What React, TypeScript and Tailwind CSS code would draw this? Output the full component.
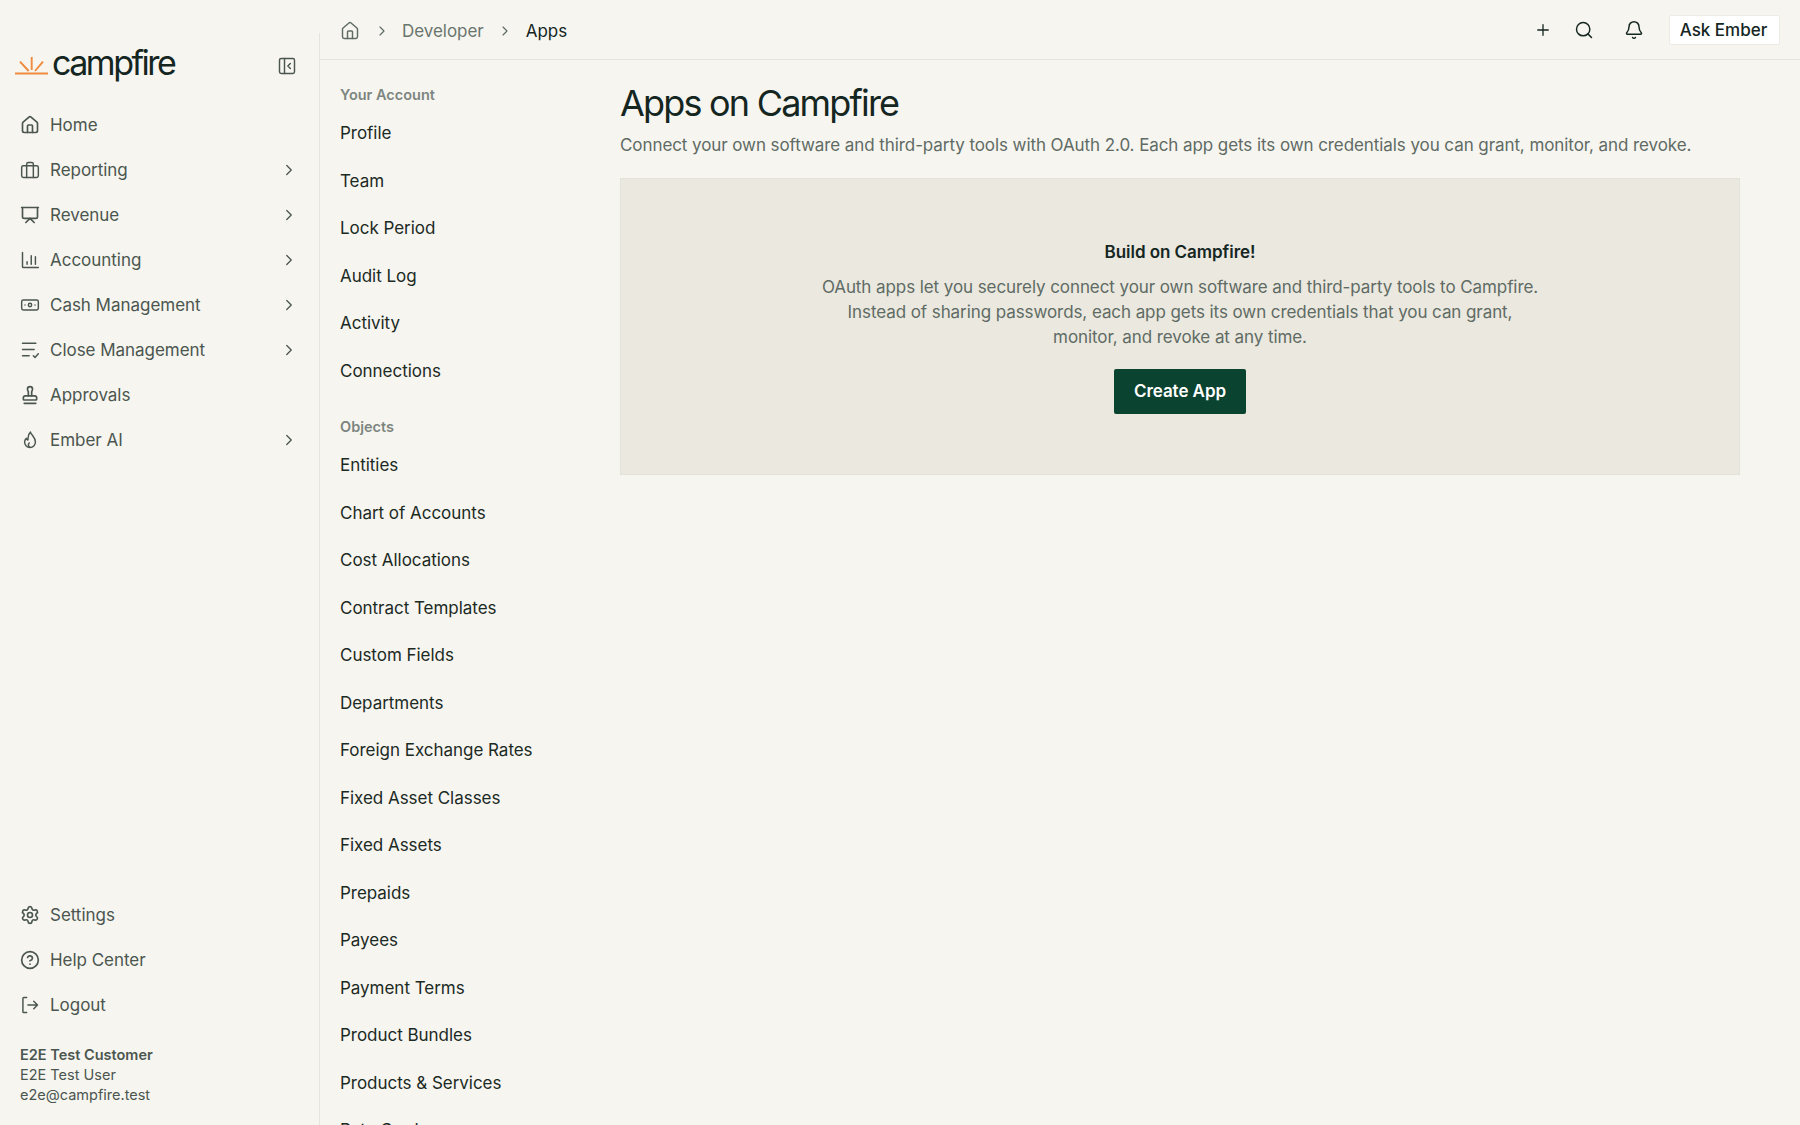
import React from "react";
import { House, Presentation, Stamp, Settings, CircleHelp, ChevronRight, PanelLeftClose, Plus, Search, Bell } from "lucide-react";

type IconProps = { className?: string };

const Svg = ({ className, children }: IconProps & { children: React.ReactNode }) => (
  <svg viewBox="0 0 24 24" fill="none" stroke="currentColor" strokeWidth={1.75} strokeLinecap="round" strokeLinejoin="round" className={className}>
    {children}
  </svg>
);

const Luggage = ({ className }: IconProps) => (
  <Svg className={className}>
    <rect x="2" y="7" width="20" height="14" rx="2" />
    <path d="M8 21V5a2 2 0 0 1 2-2h4a2 2 0 0 1 2 2v16" />
  </Svg>
);
const Chart = ({ className }: IconProps) => (
  <Svg className={className}>
    <path d="M3 3v17a1 1 0 0 0 1 1h18" />
    <path d="M8.500 17v-3M13.500 17V7M18.500 17V8" />
  </Svg>
);
const Cash = ({ className }: IconProps) => (
  <Svg className={className}>
    <rect x="2" y="6" width="20" height="12" rx="2" />
    <circle cx="12" cy="12" r="2" />
    <path d="M6 12h.01M18 12h.01" />
  </Svg>
);
const CloseList = ({ className }: IconProps) => (
  <Svg className={className}>
    <path d="M3 4h16M3 11.500h14M3 19h8" />
    <path d="M16 19l2 2 4-4.500" />
  </Svg>
);
const Flame = ({ className }: IconProps) => (
  <Svg className={className}>
    <path d="M12.500 2.500c1 3.500 6 6 6 12a6.500 6.500 0 0 1-13 0c0-2 .8-3.500 2-4.500.5 1 1.200 1.600 2 2 .5-3-.5-6.500 3-9.500z" />
    <path d="M11.500 20.500c-1.800-1.200-2-3.200-.5-5" />
  </Svg>
);
const LogoutIcon = ({ className }: IconProps) => (
  <Svg className={className}>
    <path d="M8 3H4.500a1 1 0 0 0-1 1v16a1 1 0 0 0 1 1H8" />
    <path d="M9.500 12H21M16.500 7.500 21 12l-4.500 4.500" />
  </Svg>
);

const SideRow = ({ icon: Icon, label, chevron }: { icon: React.ComponentType<IconProps>; label: string; chevron?: boolean }) => (
  <div className="flex h-[45px] items-center pl-[20px] pr-[21px] text-[#4b564f]">
    <Icon className="h-[20px] w-[20px] shrink-0 text-[#4b564f]" />
    <span className="ml-[10px] flex-1 text-[17px] leading-[24px] tracking-[-0.03px]">{label}</span>
    {chevron && <ChevronRight className="h-[18px] w-[18px] text-[#4b564f]" strokeWidth={1.75} />}
  </div>
);

const SubLink = ({ label }: { label: string }) => (
  <div className="flex h-[47.500px] items-center text-[17px] leading-[24px] tracking-[-0.03px] text-[#1c2a24]">{label}</div>
);

const SubHead = ({ label }: { label: string }) => (
  <div className="flex h-[24px] items-center text-[14.500px] font-semibold leading-[20px] text-[#7c857f]">{label}</div>
);

const account = ["Profile", "Team", "Lock Period", "Audit Log", "Activity", "Connections"];
const objects = [
  "Entities", "Chart of Accounts", "Cost Allocations", "Contract Templates", "Custom Fields", "Departments",
  "Foreign Exchange Rates", "Fixed Asset Classes", "Fixed Assets", "Prepaids", "Payees", "Payment Terms",
  "Product Bundles", "Products & Services", "Rate Cards",
];

export default function App() {
  return (
    <div className="flex h-[1125px] w-[1800px] overflow-hidden bg-[#f6f5f0] font-['Inter',sans-serif]">
      <aside className="mt-[33px] flex w-[320px] shrink-0 flex-col border-r border-[#e6e4dc] pb-[20px]">
        <div className="flex h-[64px] items-center pl-[14px] pr-[22px]">
          <svg viewBox="0 0 36 24" className="h-[24px] w-[36px] shrink-0 text-[#f08a3c]" fill="none" stroke="currentColor" strokeWidth={1.9} strokeLinecap="butt">
            <path d="M1 20.500h33" />
            <path d="M17.700 4v13M6 8.600l8.700 9.400M29 8.600 21 18" />
          </svg>
          <span className="ml-[2px] flex-1 pb-[4px] text-[34px] leading-[40px] tracking-[-2.500px] text-[#14261f]">campfire</span>
          <PanelLeftClose className="mt-[2px] h-[20px] w-[20px] text-[#4b564f]" strokeWidth={1.75} />
        </div>
        <nav className="mt-[5.500px] flex flex-col">
          <SideRow icon={House} label="Home" />
          <SideRow icon={Luggage} label="Reporting" chevron />
          <SideRow icon={Presentation} label="Revenue" chevron />
          <SideRow icon={Chart} label="Accounting" chevron />
          <SideRow icon={Cash} label="Cash Management" chevron />
          <SideRow icon={CloseList} label="Close Management" chevron />
          <SideRow icon={Stamp} label="Approvals" />
          <SideRow icon={Flame} label="Ember AI" chevron />
        </nav>
        <div className="mt-auto flex flex-col">
          <SideRow icon={Settings} label="Settings" />
          <SideRow icon={CircleHelp} label="Help Center" />
          <SideRow icon={LogoutIcon} label="Logout" />
          <div className="mt-[18px] pl-[20px] text-[14.500px] leading-[20px] text-[#4b564f]">
            <div className="font-semibold">E2E Test Customer</div>
            <div>E2E Test User</div>
            <div>e2e@campfire.test</div>
          </div>
        </div>
      </aside>

      <div className="flex min-w-0 flex-1 flex-col">
        <header className="flex h-[60px] shrink-0 items-center border-b border-[#e6e4dc] pl-[20px] pr-[20px]">
          <House className="mt-[2px] h-[20px] w-[20px] text-[#5f6b64]" strokeWidth={1.75} />
          <ChevronRight className="ml-[14px] mt-[2px] h-[16px] w-[16px] text-[#5f6b64]" strokeWidth={1.75} />
          <span className="ml-[12px] mt-[4px] text-[17px] tracking-[-0.03px] text-[#6a756e]">Developer</span>
          <ChevronRight className="ml-[13px] mt-[2px] h-[16px] w-[16px] text-[#5f6b64]" strokeWidth={1.75} />
          <span className="ml-[13px] mt-[4px] text-[17px] tracking-[-0.03px] text-[#14261f]">Apps</span>
          <div className="ml-auto mt-[1px] flex items-center">
            <Plus className="h-[18px] w-[18px] text-[#14261f]" strokeWidth={1.75} />
            <Search className="ml-[22px] h-[20px] w-[20px] text-[#14261f]" strokeWidth={1.75} />
            <Bell className="ml-[30px] h-[20px] w-[20px] text-[#14261f]" strokeWidth={1.75} />
            <div className="ml-[25px] flex h-[30px] w-[111px] items-center justify-center rounded-[2px] border border-[#ecebe4] bg-white pr-[2px] pt-[1px] text-[17px] font-medium text-[#14261f]">Ask Ember</div>
          </div>
        </header>

        <div className="flex min-h-0 flex-1">
          <div className="w-[300px] shrink-0 overflow-hidden pl-[20px] pt-[23px]">
            <SubHead label="Your Account" />
            <div className="mt-[2.500px]">
              {account.map((l) => <SubLink key={l} label={l} />)}
            </div>
            <div className="mt-[20.500px]">
              <SubHead label="Objects" />
              <div className="mt-[2.500px]">
                {objects.map((l) => <SubLink key={l} label={l} />)}
              </div>
            </div>
          </div>

          <main className="min-w-0 flex-1 pr-[60px] pt-[21px]">
            <h1 className="text-[36px] leading-[44px] tracking-[-1.800px] text-[#14261f]">Apps on Campfire</h1>
            <p className="mt-[8px] text-[17px] leading-[24px] tracking-[-0.08px] text-[#5f6b64]">Connect your own software and third-party tools with OAuth 2.0. Each app gets its own credentials you can grant, monitor, and revoke.</p>
            <section className="mt-[20.500px] flex h-[297px] flex-col items-center border border-[#e3e1d8] bg-[#eae8df] pt-[61px]">
              <h2 className="text-[17px] font-semibold leading-[24px] tracking-[-0.05px] text-[#14261f]">Build on Campfire!</h2>
              <p className="mt-[11px] w-[725px] text-center text-[17px] leading-[25px] tracking-[-0.08px] text-[#5f6b64]">OAuth apps let you securely connect your own software and third-party tools to Campfire. Instead of sharing passwords, each app gets its own credentials that you can grant, monitor, and revoke at any time.</p>
              <button className="mt-[19px] flex h-[45px] w-[132px] items-center justify-center rounded-[2px] bg-[#0b4331] pt-[1px] text-[17px] font-semibold tracking-[-0.05px] text-white">Create App</button>
            </section>
          </main>
        </div>
      </div>
    </div>
  );
}
